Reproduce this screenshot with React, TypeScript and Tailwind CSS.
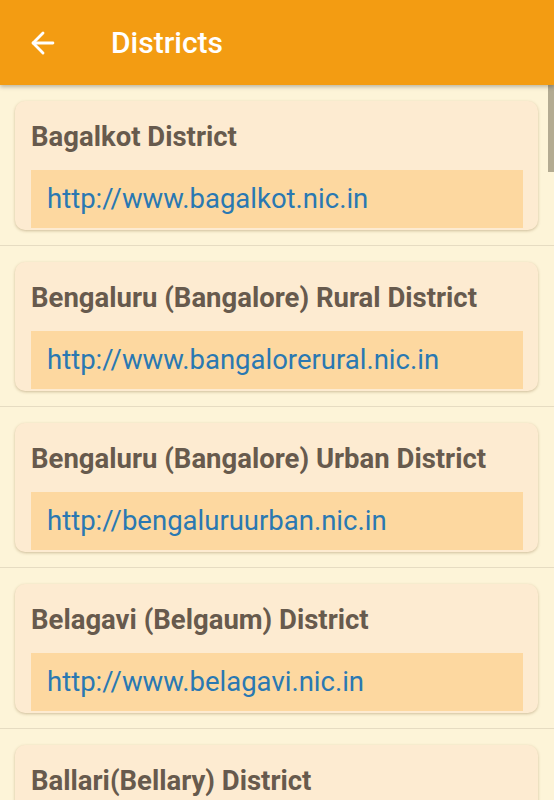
import { ArrowLeft } from "lucide-react";

const DISTRICTS = [
  { name: "Bagalkot District", url: "http://www.bagalkot.nic.in" },
  { name: "Bengaluru (Bangalore) Rural District", url: "http://www.bangalorerural.nic.in" },
  { name: "Bengaluru (Bangalore) Urban District", url: "http://bengaluruurban.nic.in" },
  { name: "Belagavi (Belgaum) District", url: "http://www.belagavi.nic.in" },
  { name: "Ballari(Bellary) District", url: "http://www.bellary.nic.in" },
];

export default function App() {
  return (
    <div className="w-[554px] h-[800px] overflow-hidden bg-[#fdf4d8] flex flex-col" style={{ fontFamily: "Roboto, 'Liberation Sans', sans-serif" }}>
      {/* Toolbar */}
      <div className="h-[85px] shrink-0 bg-[#f39c12] flex items-center shadow-[0_2px_4px_rgba(0,0,0,0.25)] z-10">
        <ArrowLeft size={34} strokeWidth={2} className="text-white ml-[26px]" />
        <h1 className="ml-[51px] text-[30px] font-medium text-white">Districts</h1>
      </div>

      <div className="relative flex-1 overflow-hidden">
        {/* scrollbar */}
        <div className="absolute right-0 top-0 w-[6px] h-[87px] bg-[#b3ab92]" />

        {DISTRICTS.map((d) => (
          <div key={d.name} className="border-b border-[#e6dcc2]">
            <div className="pt-4 pb-[15px] pl-[15px] pr-4">
              <div className="rounded-[10px] bg-[#fdebd1] shadow-[0_1px_3px_rgba(120,90,40,0.35)] pl-4 pr-[15px] pt-[17px] h-[129px] flex flex-col">
                <p className="text-[27.5px] leading-[38px] font-bold text-[#675a4d] whitespace-nowrap">{d.name}</p>
                <div className="mt-[14px] h-[58px] bg-[#fdd8a0] flex items-center pl-4">
                  <span className="text-[27.5px] text-[#2a78b2] whitespace-nowrap">{d.url}</span>
                </div>
              </div>
            </div>
          </div>
        ))}
      </div>
    </div>
  );
}
